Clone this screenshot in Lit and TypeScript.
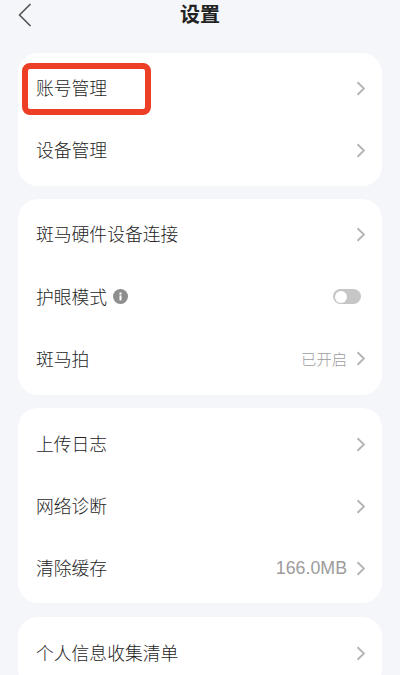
import { LitElement, html, css, svg } from "lit";
import { customElement } from "lit/decorators.js";
import { classMap } from "lit/directives/class-map.js";

type Row = { label: string; info?: boolean; toggle?: boolean; value?: string; numeric?: boolean; mark?: boolean };

const groups: Row[][] = [
  [{ label: "账号管理", mark: true }, { label: "设备管理" }],
  [{ label: "斑马硬件设备连接" }, { label: "护眼模式", info: true, toggle: true }, { label: "斑马拍", value: "已开启" }],
  [{ label: "上传日志" }, { label: "网络诊断" }, { label: "清除缓存", value: "166.0MB", numeric: true }],
  [{ label: "个人信息收集清单" }],
];

const chevron = svg`<path d="M1.5 1.2L8 7.5 1.5 13.8" fill="none" stroke="currentColor" stroke-width="1.9" stroke-linejoin="miter"/>`;

@customElement("app-root")
export class AppRoot extends LitElement {
  static styles = css`
    :host {
      display: block;
      width: 400px;
      height: 675px;
      overflow: hidden;
      background: #f5f6fa;
      font-family: "Noto Sans CJK SC", "Liberation Sans", sans-serif;
      color: #1e1e1e;
    }
    .header {
      height: 53px;
      display: grid;
      grid-template-columns: 1fr auto 1fr;
      align-items: start;
      padding: 3px 18px 0;
      box-sizing: border-box;
    }
    .back {
      width: 13px;
      height: 24px;
      color: #555;
    }
    .title {
      font-size: 20px;
      font-weight: 700;
      line-height: 22px;
      color: #222;
    }
    .groups {
      display: flex;
      flex-direction: column;
      gap: 13px;
      padding: 0 18px;
    }
    .card {
      background: #fff;
      border-radius: 20px;
      padding: 4px 0 5px;
      position: relative;
    }
    .card:nth-child(2) {
      padding-bottom: 6px;
    }
    .card:nth-child(2) .row:nth-child(2) {
      height: 63px;
    }
    .card:nth-child(2) .row:nth-child(3) {
      height: 61px;
    }
    .card:nth-child(3) {
      padding: 5px 0 4px;
    }
    .card:nth-child(4) {
      margin-top: 1px;
      padding-top: 5px;
    }
    .row {
      height: 62px;
      display: flex;
      align-items: center;
      padding: 0 17px 0 18px;
      font-size: 17.8px;
      font-weight: 300;
      position: relative;
    }
    .label {
      line-height: 24px;
      margin-bottom: 2px;
    }
    .info {
      width: 15px;
      height: 15px;
      margin-left: 6px;
    }
    .spacer {
      flex: 1;
    }
    .value {
      font-size: 15.3px;
      color: #9c9c9c;
      margin-right: 9px;
      line-height: 24px;
      margin-bottom: 1px;
    }
    .value.numeric {
      font-family: "Liberation Sans", "Noto Sans CJK SC", sans-serif;
      font-size: 17.8px;
    }
    .chev {
      width: 9px;
      height: 15px;
      color: #b4b4b4;
    }
    .toggle {
      width: 28px;
      height: 15px;
      border-radius: 8px;
      background: #c6c6c6;
      position: relative;
      margin-right: 4px;
    }
    .knob {
      position: absolute;
      left: 1.5px;
      top: 1.5px;
      width: 12px;
      height: 12px;
      border-radius: 50%;
      background: #fff;
    }
    .mark {
      position: absolute;
      left: 4px;
      top: 6px;
      width: 129px;
      height: 52px;
      box-sizing: border-box;
      border: 6px solid #ec3f26;
      border-radius: 8px;
    }
  `;

  private renderRow(r: Row) {
    return html`<div class="row">
      <span class="label">${r.label}</span>
      ${r.info
        ? html`<svg class="info" viewBox="0 0 15 15">
            <circle cx="7.5" cy="7.5" r="7.5" fill="#8e8e8e" />
            <rect x="6.5" y="6.4" width="2" height="5" fill="#fff" />
            <rect x="6.5" y="3.5" width="2" height="2" fill="#fff" />
          </svg>`
        : ""}
      <span class="spacer"></span>
      ${r.value ? html`<span class=${classMap({ value: true, numeric: !!r.numeric })}>${r.value}</span>` : ""}
      ${r.toggle
        ? html`<span class="toggle"><span class="knob"></span></span>`
        : html`<svg class="chev" viewBox="0 0 9 15">${chevron}</svg>`}
      ${r.mark ? html`<span class="mark"></span>` : ""}
    </div>`;
  }

  render() {
    return html`
      <div class="header">
        <svg class="back" viewBox="0 0 13 24">
          <path d="M12 1.5L1.5 12 12 22.5" fill="none" stroke="currentColor" stroke-width="1.7" stroke-linecap="round" stroke-linejoin="round" />
        </svg>
        <div class="title">设置</div>
        <span></span>
      </div>
      <div class="groups">
        ${groups.map((g) => html`<div class="card">${g.map((r) => this.renderRow(r))}</div>`)}
      </div>
    `;
  }
}
